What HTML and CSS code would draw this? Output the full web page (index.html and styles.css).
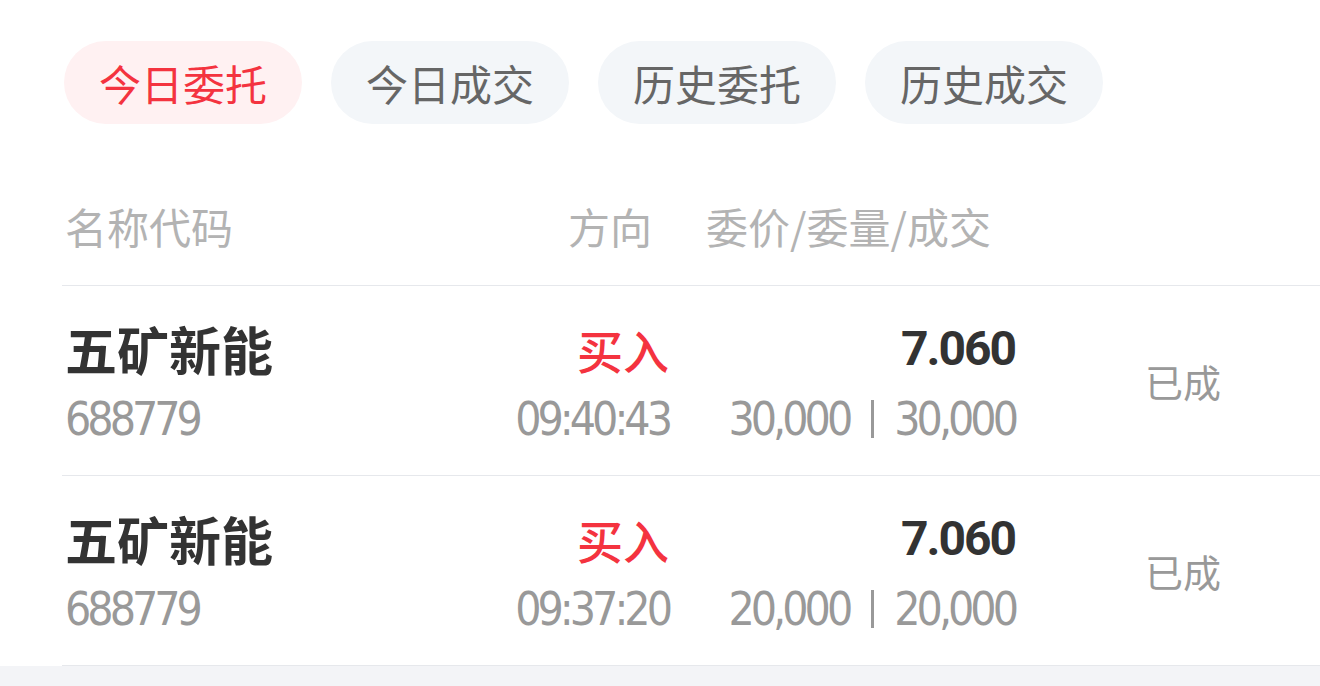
FILE: index.html
```html
<!DOCTYPE html>
<html lang="zh-CN">
<head>
<meta charset="utf-8">
<title>委托</title>
<link rel="stylesheet" href="styles.css">
</head>
<body>
<div class="page">
  <div class="tabs">
    <div class="tab active">今日委托</div>
    <div class="tab">今日成交</div>
    <div class="tab">历史委托</div>
    <div class="tab">历史成交</div>
  </div>
  <div class="list">
    <div class="head">
      <div class="h-name">名称代码</div>
      <div class="h-dir">方向</div>
      <div class="h-price">委价/委量/成交</div>
    </div>
    <div class="row">
      <div class="c-name">
        <div class="name">五矿新能</div>
        <div class="code num">688779</div>
      </div>
      <div class="c-dir">
        <div class="dir">买入</div>
        <div class="time num">09:40:43</div>
      </div>
      <div class="c-price">
        <div class="price">7.060</div>
        <div class="qty num">30,000<span class="sep"></span>30,000</div>
      </div>
      <div class="c-status">已成</div>
    </div>
    <div class="row">
      <div class="c-name">
        <div class="name">五矿新能</div>
        <div class="code num">688779</div>
      </div>
      <div class="c-dir">
        <div class="dir">买入</div>
        <div class="time num">09:37:20</div>
      </div>
      <div class="c-price">
        <div class="price">7.060</div>
        <div class="qty num">20,000<span class="sep"></span>20,000</div>
      </div>
      <div class="c-status">已成</div>
    </div>
  </div>
</div>
</body>
</html>
```

FILE: styles.css
```css
html, body {
  margin: 0;
  padding: 0;
  background: #f3f4f7;
  font-family: "Noto Sans CJK SC", "Noto Sans", sans-serif;
}

.page {
  background: #ffffff;
  width: 1320px;
}

.tabs {
  display: flex;
  gap: 29px;
  padding: 41px 0 0 64px;
}

.tab {
  width: 238px;
  height: 83px;
  border-radius: 42px;
  background: #f3f6f9;
  color: #666666;
  font-size: 42px;
  display: flex;
  align-items: center;
  justify-content: center;
}

.tab.active {
  background: #fff1f2;
  color: #f4333f;
}

.list {
  margin-top: 42px;
  padding-left: 62px;
}

.head,
.row {
  display: grid;
  grid-template-columns: 400px 207px 346px 1fr;
  border-bottom: 1px solid #e6e8ec;
}

.head {
  height: 119px;
  align-items: center;
  color: #b3b3b3;
  font-size: 42px;
}

.h-name {
  padding-left: 3px;
}

.h-dir {
  text-align: right;
  padding-right: 17px;
}

.h-price {
  padding-left: 37px;
  white-space: nowrap;
}

.row {
  height: 190px;
  box-sizing: border-box;
  padding-top: 33px;
}

.num {
  font-family: "DejaVu Sans Condensed", "Roboto", sans-serif;
  letter-spacing: -4px;
}

.c-name {
  padding-left: 3px;
}

.name {
  height: 60px;
  line-height: 60px;
  font-size: 52px;
  font-weight: 700;
  color: #333333;
}

.code {
  margin-top: 10px;
  height: 60px;
  line-height: 60px;
  font-size: 46px;
  color: #999999;
}

.c-dir,
.c-price {
  text-align: right;
}

.dir {
  height: 60px;
  line-height: 60px;
  font-size: 46px;
  font-weight: 500;
  color: #f4333f;
}

.time,
.qty {
  margin-top: 10px;
  height: 60px;
  line-height: 60px;
  font-size: 46px;
  color: #999999;
}

.price {
  height: 60px;
  line-height: 60px;
  font-family: "Roboto", sans-serif;
  font-size: 48px;
  font-weight: 700;
  letter-spacing: -2px;
  color: #333333;
}

.qty {
  display: flex;
  justify-content: flex-end;
  align-items: center;
}

.sep {
  display: inline-block;
  width: 3px;
  height: 38px;
  background: #999999;
  margin: 0 20px 0 22px;
}

.c-status {
  align-self: center;
  margin-top: -33px;
  padding-left: 130px;
  font-size: 38px;
  color: #999999;
}
```
